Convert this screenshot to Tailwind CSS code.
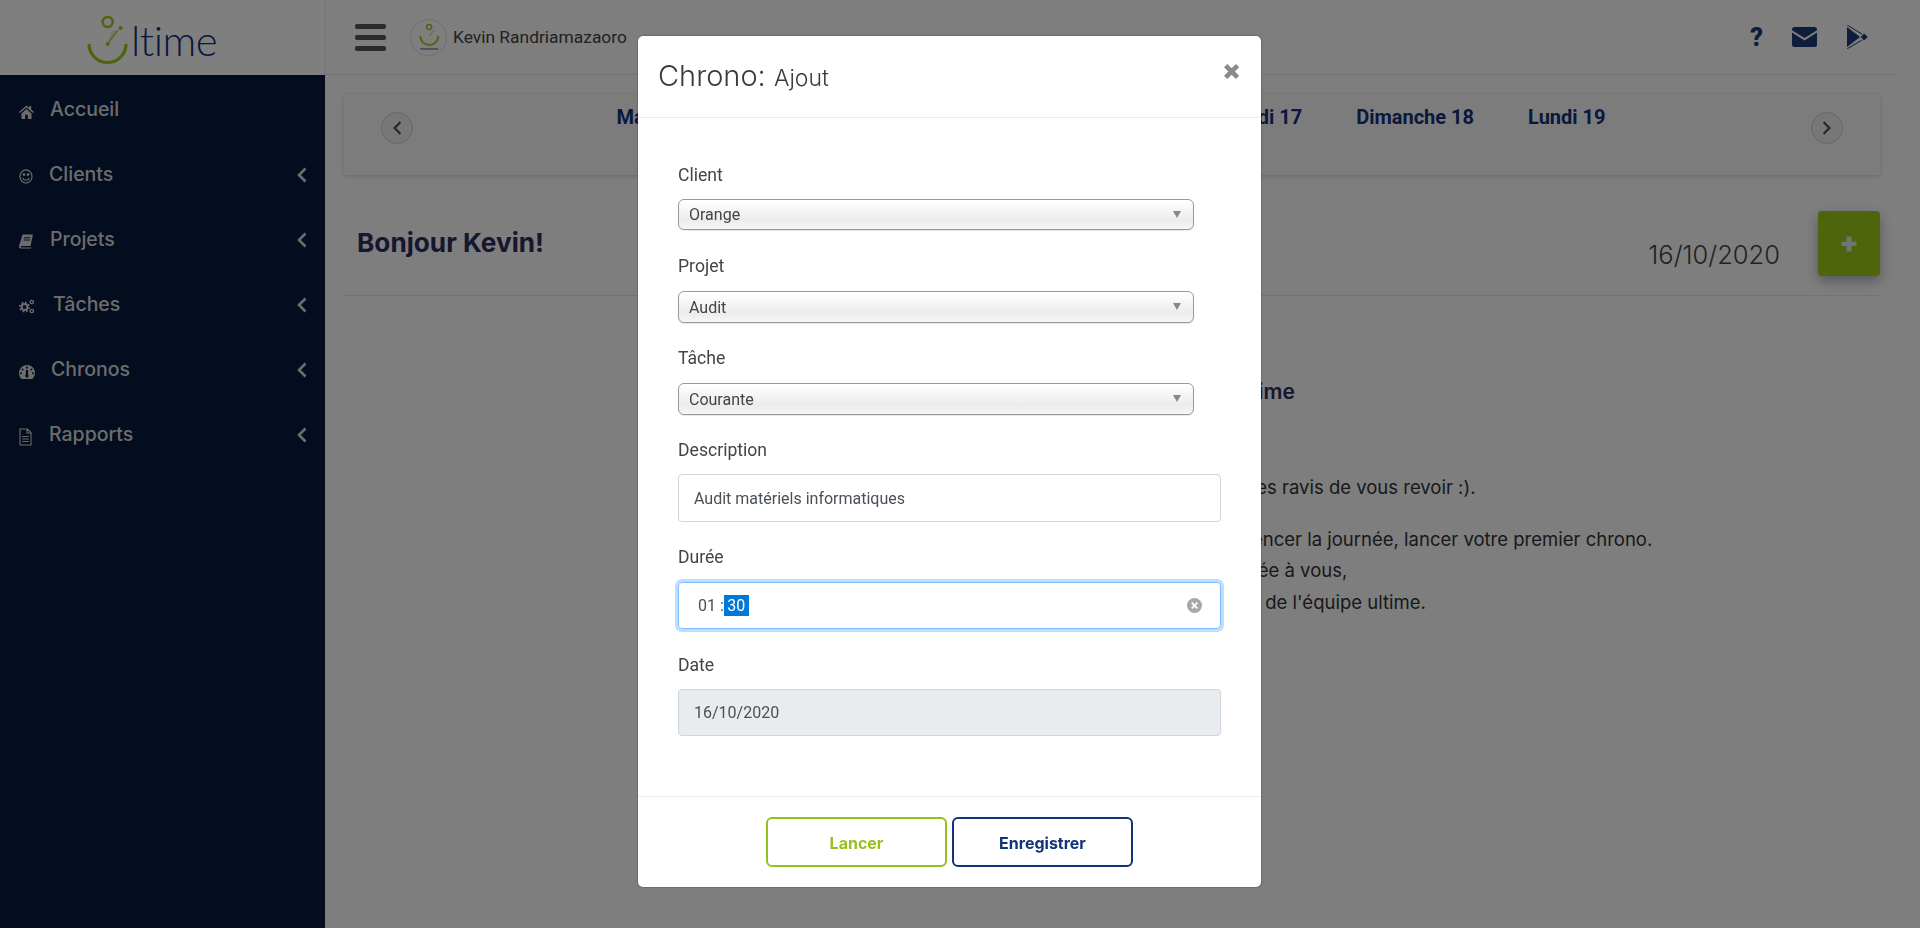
<!doctype html>
<html>

<head>
	<meta charset="UTF-8">
	<meta name="viewport" content="width=device-width, initial-scale=1.0">
	<script src="https://cdn.jsdelivr.net/npm/@tailwindcss/browser@4"></script>
</head>

<body class="font-['Roboto',sans-serif]">
	<div class="flex h-screen overflow-hidden bg-[#fcfcfc]">
		<!-- sidebar -->
		<aside class="w-[325px] shrink-0 flex flex-col bg-[#08183e]">
			<div class="h-[75px] bg-white relative border-r border-[#ececec]">
				<svg class="absolute left-[80px] top-[10px]" width="56" height="56" viewBox="80 10 56 56" fill="none">
					<circle cx="107.7" cy="22" r="5" stroke="#9cc820" stroke-width="2.5"/>
					<path d="M89 44a18.5 18.5 0 0 0 37 0" stroke="#9cc820" stroke-width="3.2"/>
					<path d="M107.7 44L112 31L118 31Z" fill="#e8e4c8"/>
					<path d="M107.7 44L118 30" stroke="#9cc820" stroke-width="1.2"/>
					<circle cx="107.7" cy="44" r="2" fill="#9cc820"/>
					<circle cx="120.7" cy="28" r="2" fill="#9cc820"/>
				</svg>
				<span class="absolute left-[131px] top-[19px] text-[42px] leading-[42px] font-light tracking-[-0.5px] text-[#12337a] font-['Lato',sans-serif]">ltime</span>
			</div>
			<nav class="pt-[2px] text-[19.5px] font-medium text-[#d8d8d8] font-['Inter',sans-serif]">
				<a class="flex items-center h-[65px] pl-[19px] pr-[18px]">
					<svg class="w-[15px] h-[14px] mt-[4px]" viewBox="0 0 16 15" fill="currentColor"><path d="M8 0.5L0 7.6l1 1.1L8 2.6l7 6.1 1-1.1-3-2.7V1.2h-2v2L8 .5zM2.6 9.2V15h4V10.5h2.8V15h4V9.2L8 4.4z"/></svg>
					<span class="ml-[16px]">Accueil</span>
				</a>
				<a class="flex items-center h-[65px] pl-[19px] pr-[18px]">
					<svg class="w-[14px] h-[15px] mt-[4px]" viewBox="0 0 14 15" fill="none" stroke="currentColor" stroke-width="1.2"><ellipse cx="7" cy="7.5" rx="6" ry="6.6"/><path d="M3.8 9a3.4 3.4 0 0 0 6.4 0"/><circle cx="5" cy="5.6" r=".8" fill="currentColor"/><circle cx="9" cy="5.6" r=".8" fill="currentColor"/></svg>
					<span class="ml-[16px]">Clients</span>
					<svg class="ml-auto w-[10px] h-[16px]" viewBox="0 0 10 16" fill="none" stroke="currentColor" stroke-width="2.6"><path d="M8.5 1.5L2 8l6.5 6.5"/></svg>
				</a>
				<a class="flex items-center h-[65px] pl-[19px] pr-[18px]">
					<svg class="w-[14px] h-[15px] mt-[4px]" viewBox="0 0 14 15" fill="currentColor"><path d="M3.5 0.5H14l-2.6 11.6H2.6c-1 0-1.2 1.4 0 1.4h9.6l-.2 1H1.8C.4 14.5-.3 13.2.2 11.5zM5 3.2v1h6.4v-1zM4.6 5.5v1H11v-1z"/></svg>
					<span class="ml-[17px]">Projets</span>
					<svg class="ml-auto w-[10px] h-[16px]" viewBox="0 0 10 16" fill="none" stroke="currentColor" stroke-width="2.6"><path d="M8.5 1.5L2 8l6.5 6.5"/></svg>
				</a>
				<a class="flex items-center h-[65px] pl-[19px] pr-[18px]">
					<svg class="w-[16px] h-[15px] mt-[4px]" viewBox="0 0 16 15" fill="none" stroke="currentColor">
						<circle cx="5.5" cy="8" r="2.9" stroke-width="2"/>
						<circle cx="5.5" cy="8" r="4.6" stroke-width="1.6" stroke-dasharray="1.8 1.8"/>
						<circle cx="12.8" cy="3" r="1.7" stroke-width="1.3"/>
						<circle cx="12.8" cy="12" r="1.7" stroke-width="1.3"/>
					</svg>
					<span class="ml-[18px]">Tâches</span>
					<svg class="ml-auto w-[10px] h-[16px]" viewBox="0 0 10 16" fill="none" stroke="currentColor" stroke-width="2.6"><path d="M8.5 1.5L2 8l6.5 6.5"/></svg>
				</a>
				<a class="flex items-center h-[65px] pl-[19px] pr-[18px]">
					<svg class="w-[16px] h-[14px] mt-[4px]" viewBox="0 0 16 14" fill="currentColor"><path fill-rule="evenodd" d="M8 0a8 8 0 0 0-8 8c0 2.2.8 4.2 2.2 5.6a1 1 0 0 0 .7.4h10.2a1 1 0 0 0 .7-.4A8 8 0 0 0 16 8a8 8 0 0 0-8-8zM8 1.6a1 1 0 1 1 0 2.1 1 1 0 0 1 0-2.1zM3.6 3.6a1 1 0 1 1 0 2 1 1 0 0 1 0-2zM12.4 3.6a1 1 0 1 1 0 2 1 1 0 0 1 0-2zM2 7.2a1 1 0 1 1 0 2 1 1 0 0 1 0-2zM14 7.2a1 1 0 1 1 0 2 1 1 0 0 1 0-2zM6.9 5h2.2L9 9.6a1.6 1.6 0 1 1-2.1 0z"/></svg>
					<span class="ml-[16px]">Chronos</span>
					<svg class="ml-auto w-[10px] h-[16px]" viewBox="0 0 10 16" fill="none" stroke="currentColor" stroke-width="2.6"><path d="M8.5 1.5L2 8l6.5 6.5"/></svg>
				</a>
				<a class="flex items-center h-[65px] pl-[19px] pr-[18px]">
					<svg class="w-[13px] h-[18px] mt-[4px]" viewBox="0 0 13 18" fill="none" stroke="currentColor" stroke-width="1.1"><path d="M1 1h7.4L12 4.6V17H1zM8 1v4h4M3.2 8.5h6.6M3.2 11h6.6M3.2 13.5h6.6"/></svg>
					<span class="ml-[17px]">Rapports</span>
					<svg class="ml-auto w-[10px] h-[16px]" viewBox="0 0 10 16" fill="none" stroke="currentColor" stroke-width="2.6"><path d="M8.5 1.5L2 8l6.5 6.5"/></svg>
				</a>
			</nav>
		</aside>

		<!-- page -->
		<main class="flex-1 min-w-0 flex flex-col">
			<header class="h-[75px] mr-[22px] flex items-center border-b border-[#e6e6e6] pl-[30px] pr-[30px]">
				<div class="w-[31px] flex flex-col gap-[6px]">
					<span class="h-[5px] rounded-[2px] bg-[#555]"></span>
					<span class="h-[5px] rounded-[2px] bg-[#555]"></span>
					<span class="h-[5px] rounded-[2px] bg-[#555]"></span>
				</div>
				<div class="ml-[24px] w-[37px] h-[37px] rounded-full border border-[#dcdcdc] flex items-center justify-center">
					<svg width="24" height="28" viewBox="85 14 45 56" fill="none">
						<circle cx="107.7" cy="22" r="5" stroke="#9cc820" stroke-width="3"/>
						<path d="M90 40a18 18 0 0 0 36 0" stroke="#9cc820" stroke-width="4"/>
						<path d="M108 40L118 28" stroke="#9cc820" stroke-width="1.5"/>
						<path d="M90 66h36" stroke="#9aa6c0" stroke-width="4"/>
					</svg>
				</div>
				<span class="ml-[6px] text-[17.4px] text-[#444]">Kevin Randriamazaoro</span>
				<div class="ml-auto flex items-center text-[#1d3a78]">
					<span class="text-[25px] font-black leading-none">?</span>
					<svg class="ml-[29px] w-[25px] h-[20px]" viewBox="0 0 25 20" fill="currentColor"><path d="M2.5 0h20A2.5 2.5 0 0 1 25 2.5v.8L12.5 11 0 3.3v-.8A2.5 2.5 0 0 1 2.5 0zM0 5.6l12.5 7.8L25 5.6V17.5a2.5 2.5 0 0 1-2.5 2.5h-20A2.5 2.5 0 0 1 0 17.5z"/></svg>
					<svg class="ml-[30px] w-[21px] h-[24px]" viewBox="0 0 21 24" fill="currentColor">
						<path d="M0 2l13 10L0 22z"/>
						<path d="M0.3 0.3L15 9M0.3 23.7L15 15" fill="none" stroke="currentColor" stroke-width="1"/>
						<path d="M17 8.5l3.8 3.5-3.8 3.5-3.2-3.5z"/>
					</svg>
				</div>
			</header>

			<div class="mt-[19px] ml-[19px] mr-[40px] h-[81px] flex items-start justify-between bg-[#f9f9f9] shadow-[0_1px_4px_rgba(0,0,0,0.18)] px-[37px]">
				<button class="mt-[18px] w-[32px] h-[32px] rounded-full border border-[#cfcfcf] bg-[#eee] flex items-center justify-center">
					<svg width="9" height="14" viewBox="0 0 9 14" fill="none" stroke="#444" stroke-width="2"><path d="M7.5 1L1.5 7l6 6"/></svg>
				</button>
				<div class="mt-[11px] -ml-[2px] flex gap-[54px] text-[20px] leading-[24px] font-bold text-[#12327a] whitespace-nowrap">
					<span>Mardi 13</span><span>Mercredi 14</span><span>Jeudi 15</span><span>Vendredi 16</span><span>Samedi 17</span><span>Dimanche 18</span><span>Lundi 19</span>
				</div>
				<button class="mt-[18px] w-[32px] h-[32px] rounded-full border border-[#cfcfcf] bg-[#eee] flex items-center justify-center">
					<svg width="9" height="14" viewBox="0 0 9 14" fill="none" stroke="#444" stroke-width="2"><path d="M1.5 1l6 6-6 6"/></svg>
				</button>
			</div>

			<div class="mt-[36px] ml-[19px] mr-[40px] h-[85px] flex items-start border-b border-[#e6e6e6] pl-[13px]">
				<h1 class="mt-[14px] text-[26.2px] leading-[36px] font-bold text-[#2c2f5c] font-['Inter',sans-serif]">Bonjour Kevin!</h1>
				<span class="ml-auto mt-[25px] text-[25.5px] leading-[38px] font-light text-[#444] font-['Inter',sans-serif]">16/10/2020</span>
				<button class="ml-[38px] w-[62px] h-[65px] rounded-[4px] bg-[#9ccb19] shadow-[0_5px_12px_rgba(0,0,0,0.3)] text-[#e8e8e8] text-[30px] font-black leading-none">+</button>
			</div>

			<div class="ml-[827px] mt-[81px] font-['Inter',sans-serif] text-[18.5px] text-[#333] whitespace-nowrap">
				<h2 class="-ml-[70px] text-[21px] leading-[30px] font-semibold text-[#2c2f5c]">Bienvenue sur ultime</h2>
				<p class="mt-[65px] leading-[30px]">Nous sommes ravis de vous revoir :).</p>
				<p class="mt-[22px] leading-[31px]">Pour commencer la journée, lancer votre premier chrono.</p>
				<p class="leading-[31px]">Bonne journée à vous,</p>
				<p class="leading-[32px]">Kevin Randy de l'équipe ultime.</p>
			</div>
		</main>
	</div>

	<!-- overlay + modal -->
	<div class="fixed inset-0 bg-black/50">
		<div class="ml-[638px] mt-[36px] w-[623px] h-[851px] flex flex-col bg-white rounded-[5px] shadow-[0_0_2px_rgba(0,0,0,0.5)] text-[#444]">
			<div class="h-[82px] shrink-0 flex items-start border-b border-[#e9ecef] pl-[20px] pr-[20px] font-['Inter',sans-serif]">
				<h2 class="mt-[19px] text-[29px] leading-[42px] font-light text-[#3a3a3a]">Chrono: <span class="text-[23px]">Ajout</span></h2>
				<button class="ml-auto mt-[19px] text-[27px] leading-[30px] font-black text-[#8a8a8a]">×</button>
			</div>

			<form class="flex-1 pl-[40px] text-[17.6px]">
				<label class="block mt-[45px] leading-[24px]">Client</label>
				<select class="block mt-[12px] w-[516px] h-[31px] pl-[10px] pt-[1px] appearance-none border border-[#999] rounded-[6px] text-[16px] bg-linear-to-b from-white via-[#ececec] via-70% to-[#f6f6f6] shadow-[0_1px_1px_rgba(0,0,0,0.1)]"><option>Orange</option></select>
				<label class="block mt-[24px] leading-[24px]">Projet</label>
				<select class="block mt-[13px] w-[516px] h-[32px] pl-[10px] pt-[1px] appearance-none border border-[#999] rounded-[6px] text-[16px] bg-linear-to-b from-white via-[#ececec] via-70% to-[#f6f6f6] shadow-[0_1px_1px_rgba(0,0,0,0.1)]"><option>Audit</option></select>
				<label class="block mt-[23px] leading-[24px]">Tâche</label>
				<select class="block mt-[13px] w-[516px] h-[32px] pl-[10px] pt-[1px] appearance-none border border-[#999] rounded-[6px] text-[16px] bg-linear-to-b from-white via-[#ececec] via-70% to-[#f6f6f6] shadow-[0_1px_1px_rgba(0,0,0,0.1)]"><option>Courante</option></select>
				<label class="block mt-[23px] leading-[24px]">Description</label>
				<input class="block mt-[12px] w-[543px] h-[48px] px-[15px] border border-[#ced4da] rounded-[4px] text-[16px] text-[#495057]" value="Audit matériels informatiques">
				<label class="block mt-[23px] leading-[24px]">Durée</label>
				<div class="mt-[13px] w-[543px] h-[47px] flex items-center pl-[19px] pr-[18px] border border-[#80bdff] rounded-[4px] shadow-[0_0_0_3px_rgba(0,123,255,0.25)] text-[16px] text-[#495057]">
					<span>01 :</span><span class="w-[25px] h-[21px] leading-[21px] text-center bg-[#0078d7] text-white">30</span>
					<span class="ml-auto w-[15px] h-[15px] rounded-full bg-[#a8a8a8] flex items-center justify-center -mt-[1px]">
						<svg width="7" height="7" viewBox="0 0 7 7" stroke="#fff" stroke-width="1.8"><path d="M.7.7l5.6 5.6M6.3.7L.7 6.3"/></svg>
					</span>
				</div>
				<label class="block mt-[24px] leading-[24px]">Date</label>
				<input class="block mt-[12px] w-[543px] h-[47px] px-[15px] border border-[#ced4da] rounded-[4px] text-[16px] text-[#495057] bg-[#e9ecef] opacity-100" value="16/10/2020" disabled>
			</form>

			<div class="shrink-0 flex justify-center gap-[5px] border-t border-[#e9ecef] pt-[20px] pb-[20px] font-['Inter',sans-serif]">
				<button class="w-[181px] h-[50px] pt-[1px] border-2 border-[#95c11f] rounded-[6px] text-[16px] font-bold text-[#95c11f]">Lancer</button>
				<button class="w-[181px] h-[50px] pt-[1px] border-2 border-[#0f3478] rounded-[6px] text-[16px] font-bold text-[#0f3478]">Enregistrer</button>
			</div>
		</div>
	</div>

	<!-- select arrows sit over the form controls -->
	<span class="fixed left-[1173px] top-[211px] w-0 h-0 border-x-[4px] border-x-transparent border-t-[7px] border-t-[#888]"></span>
	<span class="fixed left-[1173px] top-[303px] w-0 h-0 border-x-[4px] border-x-transparent border-t-[7px] border-t-[#888]"></span>
	<span class="fixed left-[1173px] top-[395px] w-0 h-0 border-x-[4px] border-x-transparent border-t-[7px] border-t-[#888]"></span>
</body>
</html>
